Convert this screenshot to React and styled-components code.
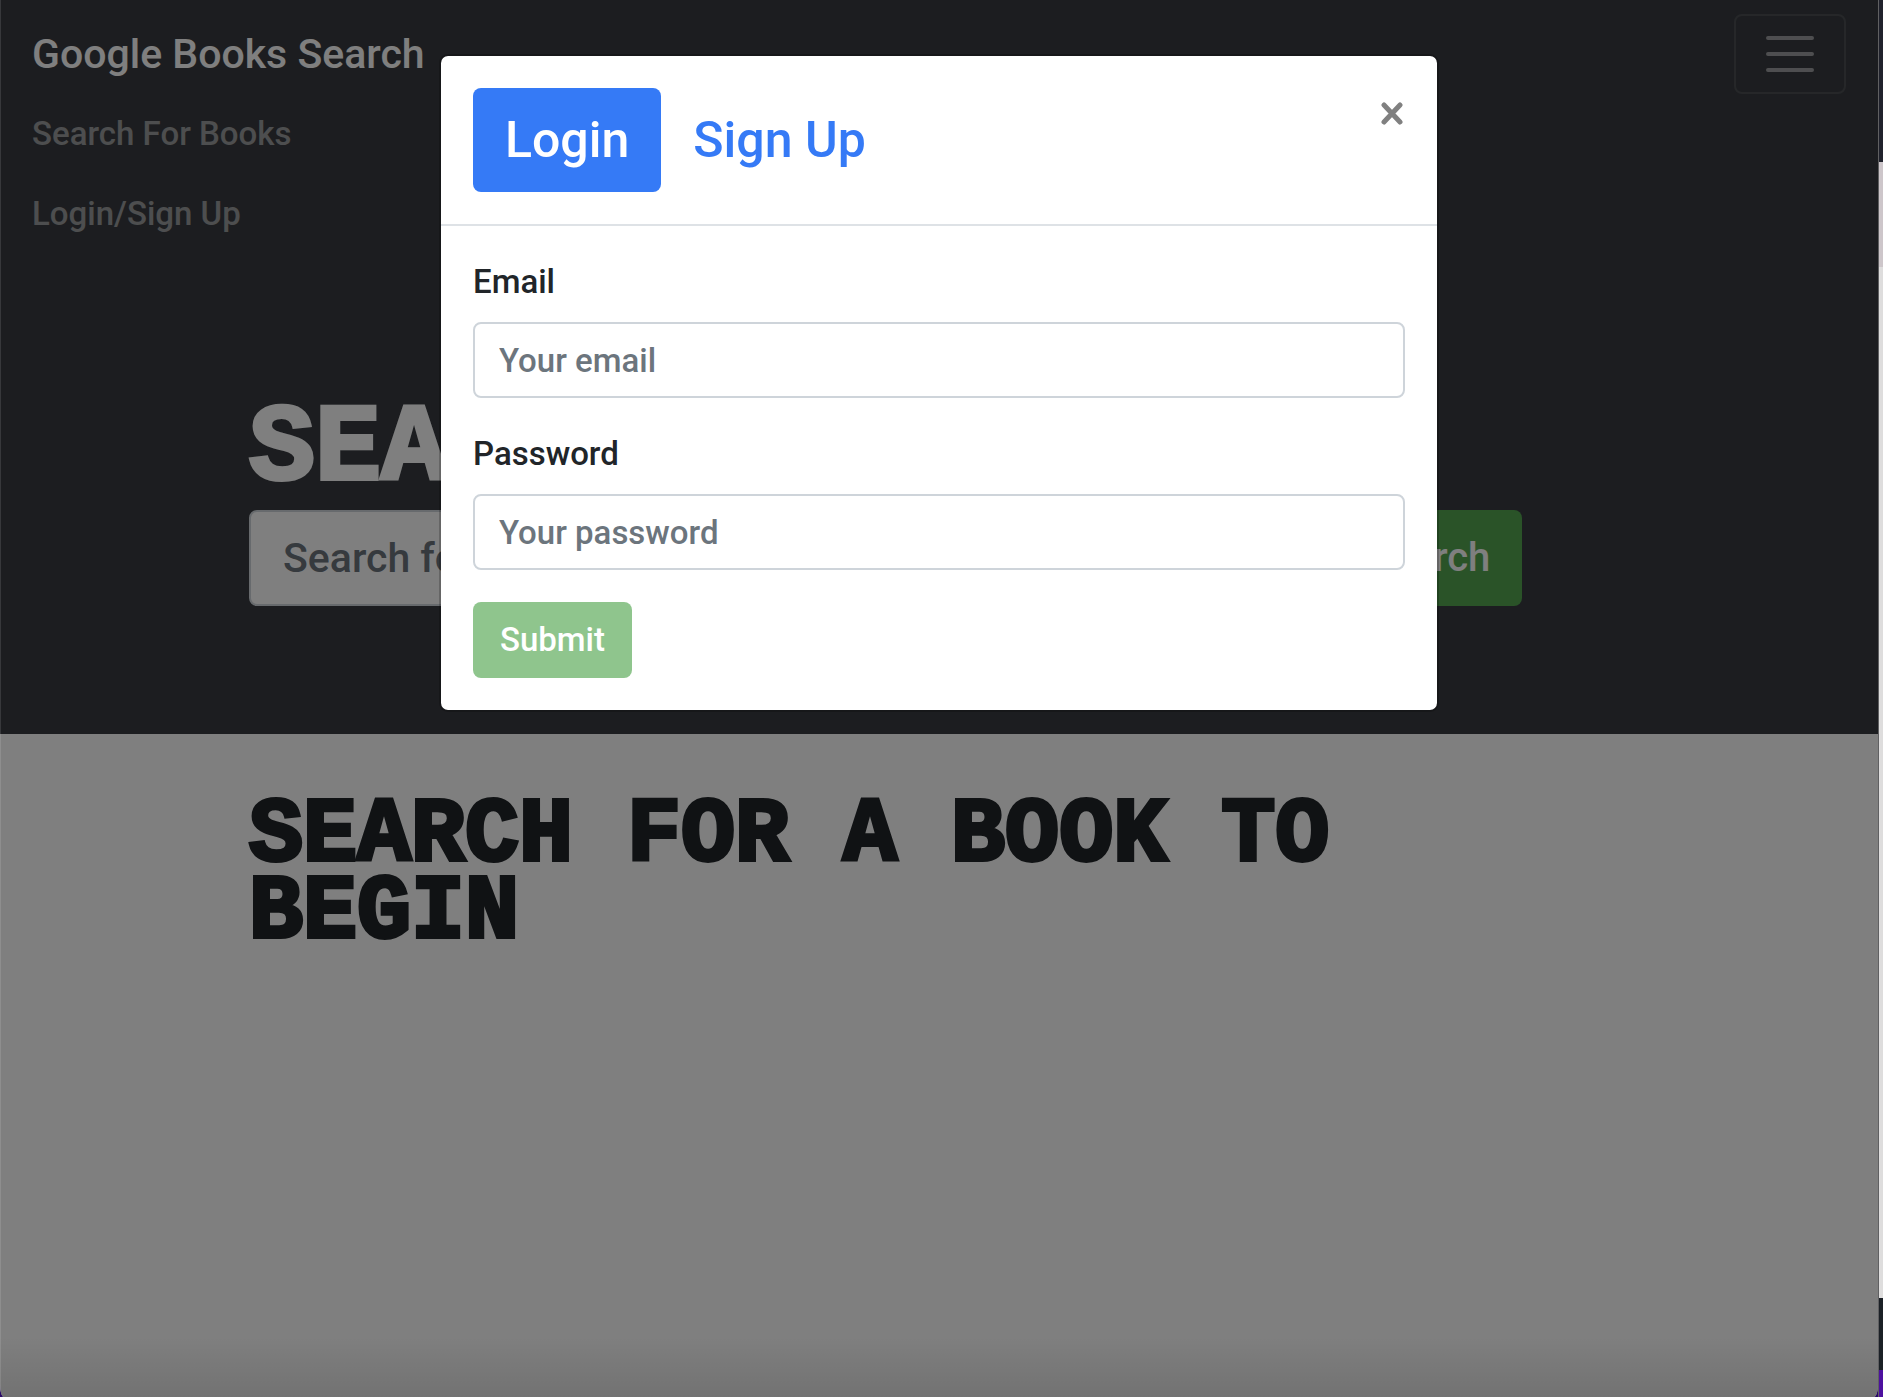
import React, { useState } from "react";
import styled, { createGlobalStyle } from "styled-components";

const GlobalStyle = createGlobalStyle`
  *, *::before, *::after { box-sizing: border-box; }
  body {
    margin: 0;
    background: #2a0a66;
    color: #212529;
    font-family: Roboto, "Liberation Sans", sans-serif;
    font-size: 33px;
    font-weight: 500;
    line-height: 48px;
  }
  input, button { font: inherit; }
`;

const Desktop = styled.div`
  display: flex;
  min-height: 100vh;
`;

const Window = styled.div`
  position: relative;
  flex: 1;
  min-width: 0;
  background: #fff;
  border-radius: 0 0 4px 4px / 0 0 12px 12px;
  overflow: hidden;
`;

const DesktopEdge = styled.div`
  display: flex;
  flex-direction: column;
  width: 5px;
  border-left: 1px solid #606062;
`;

const EdgeBand = styled.div`
  flex: ${(p) => p.$weight} 0 0;
  background: ${(p) => p.$color};
`;

const Navbar = styled.header`
  display: flex;
  flex-wrap: wrap;
  align-items: center;
  justify-content: space-between;
  padding: 14px 32px;
  background: #383b40;
`;

const Brand = styled.a`
  color: #fff;
  font-size: 41px;
  line-height: 60px;
  text-decoration: none;
`;

const Toggler = styled.button`
  display: flex;
  align-items: center;
  justify-content: center;
  width: 112px;
  height: 80px;
  padding: 0;
  border: 2px solid rgba(255, 255, 255, 0.1);
  border-radius: 8px;
  background: transparent;
`;

const NavLinks = styled.nav`
  display: flex;
  flex-direction: column;
  align-items: flex-start;
  flex-basis: 100%;
`;

const NavLink = styled.a`
  padding: 16px 0;
  color: rgba(255, 255, 255, 0.5);
  text-decoration: none;
`;

const Hero = styled.section`
  padding: 130px 0 128px;
  background: #383b40;
`;

const Container = styled.div`
  max-width: 1440px;
  margin: 0 auto;
  padding: 0 30px;
`;

const Title = styled.h1`
  margin: 0;
  padding: 4px 0 12px;
  color: #fff;
  font-family: "Liberation Mono", monospace;
  font-size: 110px;
  font-weight: 700;
  line-height: 96px;
  text-transform: uppercase;
  white-space: nowrap;
  -webkit-text-stroke: 4px currentColor;
`;

const Prompt = styled.h2`
  margin: 0;
  padding: 64px 0;
  font-family: "Liberation Mono", monospace;
  font-size: 90px;
  font-weight: 700;
  line-height: 77px;
  text-transform: uppercase;
  -webkit-text-stroke: 4px currentColor;
`;

const SearchForm = styled.form`
  display: grid;
  grid-template-columns: minmax(0, 900px) auto;
  gap: 48px;
`;

const TextInput = styled.input`
  display: block;
  width: 100%;
  height: ${(p) => (p.$large ? 96 : 76)}px;
  padding: 0 ${(p) => (p.$large ? 32 : 24)}px;
  border: 2px solid #ced4da;
  border-radius: 8px;
  background: #fff;
  color: #495057;
  font-size: ${(p) => (p.$large ? 41 : 33)}px;
  outline: none;
  &::placeholder { color: #6c757d; opacity: 1; }
`;

const ActionButton = styled.button`
  justify-self: start;
  min-width: ${(p) => (p.$large ? 315 : 159)}px;
  height: ${(p) => (p.$large ? 96 : 76)}px;
  padding: 0 ${(p) => (p.$large ? 32 : 24)}px;
  border: 0;
  border-radius: 8px;
  background: #54a751;
  color: #fff;
  font-size: ${(p) => (p.$large ? 40 : 33)}px;
  &:disabled { opacity: 0.65; }
`;

const Backdrop = styled.div`
  position: absolute;
  inset: 0;
  display: flex;
  align-items: flex-start;
  justify-content: center;
  padding-top: 54px;
  background:
    linear-gradient(to top, rgba(0, 0, 0, 0.1), transparent 60px),
    rgba(0, 0, 0, 0.5);
  box-shadow: inset 1px 0 rgba(255, 255, 255, 0.12);
`;

const Dialog = styled.div`
  width: 100%;
  max-width: 1000px;
  border: 2px solid rgba(0, 0, 0, 0.2);
  border-radius: 9px;
  background: #fff;
  background-clip: padding-box;
`;

const DialogHeader = styled.div`
  display: flex;
  align-items: flex-start;
  justify-content: space-between;
  padding: 32px;
  border-bottom: 2px solid #dee2e6;
`;

const Tabs = styled.div`
  display: flex;
`;

const Tab = styled.button`
  min-width: 188px;
  padding: 16px 32px;
  border: 0;
  border-radius: 8px;
  background: ${(p) => (p.$active ? "#357af6" : "transparent")};
  color: ${(p) => (p.$active ? "#fff" : "#357af6")};
  font-size: 50px;
  line-height: 72px;
`;

const CloseButton = styled.button`
  display: flex;
  padding: 14px 1px;
  border: 0;
  background: transparent;
`;

const DialogBody = styled.form`
  display: flex;
  flex-direction: column;
  align-items: flex-start;
  gap: 32px;
  padding: 32px;
`;

const Field = styled.div`
  width: 100%;
`;

const Label = styled.label`
  display: block;
  margin-bottom: 16px;
`;

const edgeBands = [
  { weight: 162, color: "#20222c" },
  { weight: 105, color: "#cdc6ca" },
  { weight: 1031, color: "#dedddd" },
  { weight: 72, color: "#1b2026" },
  { weight: 27, color: "#4d109f" },
];

const stop = (event) => event.preventDefault();

export default function App() {
  const [tab, setTab] = useState("login");

  return (
    <>
      <GlobalStyle />
      <Desktop>
        <Window>
          <Navbar>
            <Brand href="#home">Google Books Search</Brand>
            <Toggler type="button" aria-label="Toggle navigation">
              <svg width="48" height="36" viewBox="0 0 48 36" aria-hidden="true">
                <path
                  d="M2 2H46M2 18H46M2 34H46"
                  stroke="#fff"
                  strokeOpacity="0.5"
                  strokeWidth="4"
                  strokeLinecap="round"
                />
              </svg>
            </Toggler>
            <NavLinks>
              <NavLink href="#search">Search For Books</NavLink>
              <NavLink href="#login">Login/Sign Up</NavLink>
            </NavLinks>
          </Navbar>
          <Hero>
            <Container>
              <Title>Search for Books!</Title>
              <SearchForm onSubmit={stop}>
                <TextInput $large type="text" aria-label="Search for a book" placeholder="Search for a book" />
                <ActionButton $large type="submit">Submit Search</ActionButton>
              </SearchForm>
            </Container>
          </Hero>
          <Container>
            <Prompt>Search for a book to begin</Prompt>
          </Container>

          <Backdrop>
            <Dialog role="dialog" aria-modal="true" aria-label="Login or sign up">
              <DialogHeader>
                <Tabs role="tablist">
                  <Tab type="button" role="tab" aria-selected={tab === "login"} $active={tab === "login"} onClick={() => setTab("login")}>
                    Login
                  </Tab>
                  <Tab type="button" role="tab" aria-selected={tab === "signup"} $active={tab === "signup"} onClick={() => setTab("signup")}>
                    Sign Up
                  </Tab>
                </Tabs>
                <CloseButton type="button" aria-label="Close">
                  <svg width="24" height="24" viewBox="0 0 24 24" aria-hidden="true">
                    <path d="M4 3L20 20M20 3L4 20" stroke="#808080" strokeWidth="5" strokeLinecap="round" />
                  </svg>
                </CloseButton>
              </DialogHeader>
              <DialogBody onSubmit={stop}>
                <Field>
                  <Label htmlFor="email">Email</Label>
                  <TextInput id="email" type="text" placeholder="Your email" />
                </Field>
                <Field>
                  <Label htmlFor="password">Password</Label>
                  <TextInput id="password" type="password" placeholder="Your password" />
                </Field>
                <ActionButton type="submit" disabled>Submit</ActionButton>
              </DialogBody>
            </Dialog>
          </Backdrop>
        </Window>
        <DesktopEdge>
          {edgeBands.map((band) => (
            <EdgeBand key={band.color} $weight={band.weight} $color={band.color} />
          ))}
        </DesktopEdge>
      </Desktop>
    </>
  );
}
